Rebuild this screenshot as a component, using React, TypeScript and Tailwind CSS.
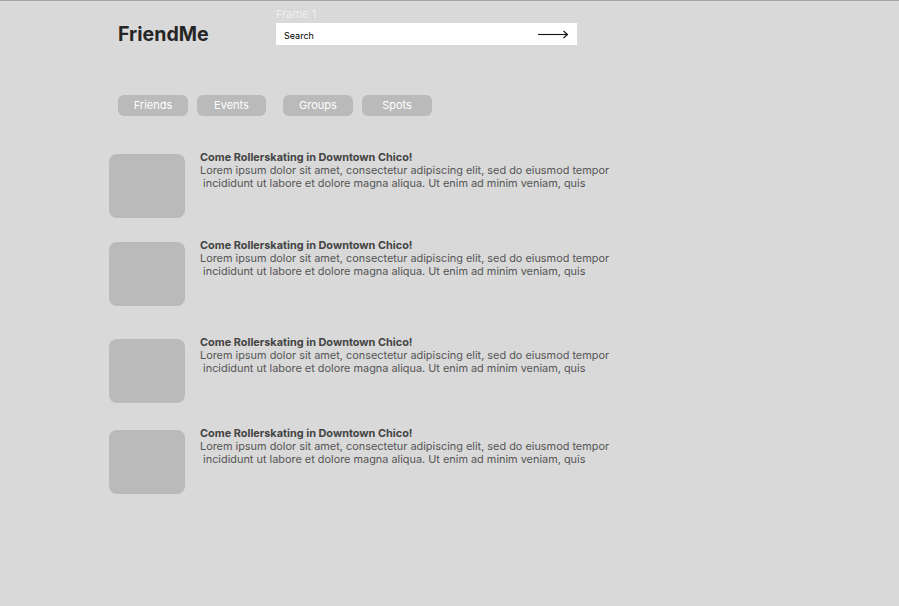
const tabs = [
  { label: "Friends", cls: "w-[70px]" },
  { label: "Events", cls: "w-[69px] ml-[9px]" },
  { label: "Groups", cls: "w-[70px] ml-[17px]" },
  { label: "Spots", cls: "w-[70px] ml-[9px]" },
];

const posts = [
  { id: 1, mt: "mt-[35px]" },
  { id: 2, mt: "mt-[21px]" },
  { id: 3, mt: "mt-[30px]" },
  { id: 4, mt: "mt-[24px]" },
];

function Arrow() {
  return (
    <svg width="31" height="9" viewBox="0 0 31 9" fill="none">
      <path d="M0 4.5H29.5" stroke="#111" strokeWidth="1.1" />
      <path d="M25.5 1L29.5 4.5L25.5 8" stroke="#111" strokeWidth="1.1" />
    </svg>
  );
}

export default function App() {
  return (
    <div
      className="min-h-[606px] w-full bg-[#d9d9d9] border-t border-[#a3a3a3]"
      style={{ fontFamily: "Inter, 'Noto Sans', sans-serif" }}
    >
      {/* header */}
      <div className="flex pl-[118px] pt-[5px]">
        <div className="w-[158px] pt-[16px] text-[19.6px] leading-[24px] font-bold text-[#262626]">
          FriendMe
        </div>
        <div className="flex flex-col">
          <span className="text-[11px] leading-[17px] text-white/60">Frame 1</span>
          <div className="flex items-center justify-between w-[301px] h-[22px] bg-white pl-[8px] pr-[8px]">
            <span className="text-[9px] text-black pt-[4px]">Search</span>
            <Arrow />
          </div>
        </div>
      </div>

      {/* tabs */}
      <div className="flex pl-[118px] mt-[49px]">
        {tabs.map((t) => (
          <div
            key={t.label}
            className={`${t.cls} h-[21px] rounded-[6px] bg-[#bababa] flex items-center justify-center text-[11px] text-white`}
          >
            {t.label}
          </div>
        ))}
      </div>

      {/* posts */}
      <div className="flex flex-col pl-[109px]">
        {posts.map((p) => (
          <div key={p.id} className={`flex ${p.mt}`}>
            <div className="w-[76px] h-[64px] rounded-[8px] bg-[#bababa] shrink-0 mt-[3px]" />
            <div className="ml-[15px] text-[10.9px] leading-[13px] text-[#555]">
              <div className="font-bold text-[#444]">Come Rollerskating in Downtown Chico!</div>
              <div>Lorem ipsum dolor sit amet, consectetur adipiscing elit, sed do eiusmod tempor</div>
              <div>&nbsp;incididunt ut labore et dolore magna aliqua. Ut enim ad minim veniam, quis</div>
            </div>
          </div>
        ))}
      </div>
    </div>
  );
}
